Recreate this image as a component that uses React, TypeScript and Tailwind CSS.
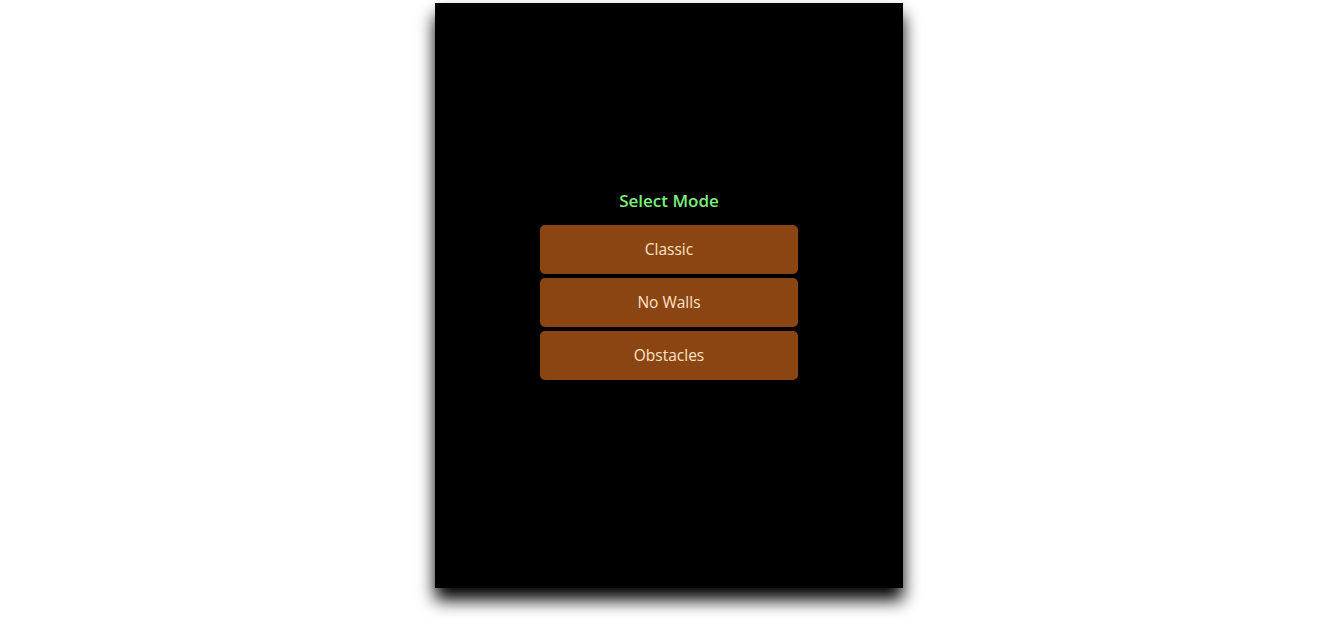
import React from "react";

const MODES = ["Classic", "No Walls", "Obstacles"];

export default function App() {
  return (
    <div className="min-h-screen w-full bg-white flex justify-center pt-[3px] pl-[6px]">
      <div
        className="flex h-[585px] w-[468px] flex-col items-center bg-black pt-[184px] shadow-[0_12px_16px_rgba(0,0,0,1)]"
        style={{ fontFamily: '"Open Sans", "DejaVu Sans", sans-serif' }}
      >
        <h2 className="mb-[10px] text-[17px] font-semibold leading-[28px] text-[#7cf07c]">
          Select Mode
        </h2>
        <div className="flex flex-col gap-[4px]">
          {MODES.map((m) => (
            <button
              key={m}
              className="flex h-[49px] w-[258px] items-center justify-center rounded-[5px] bg-[#8b4513] pt-[1px] text-[15.5px] text-[#ffe4c4]"
            >
              {m}
            </button>
          ))}
        </div>
      </div>
    </div>
  );
}
